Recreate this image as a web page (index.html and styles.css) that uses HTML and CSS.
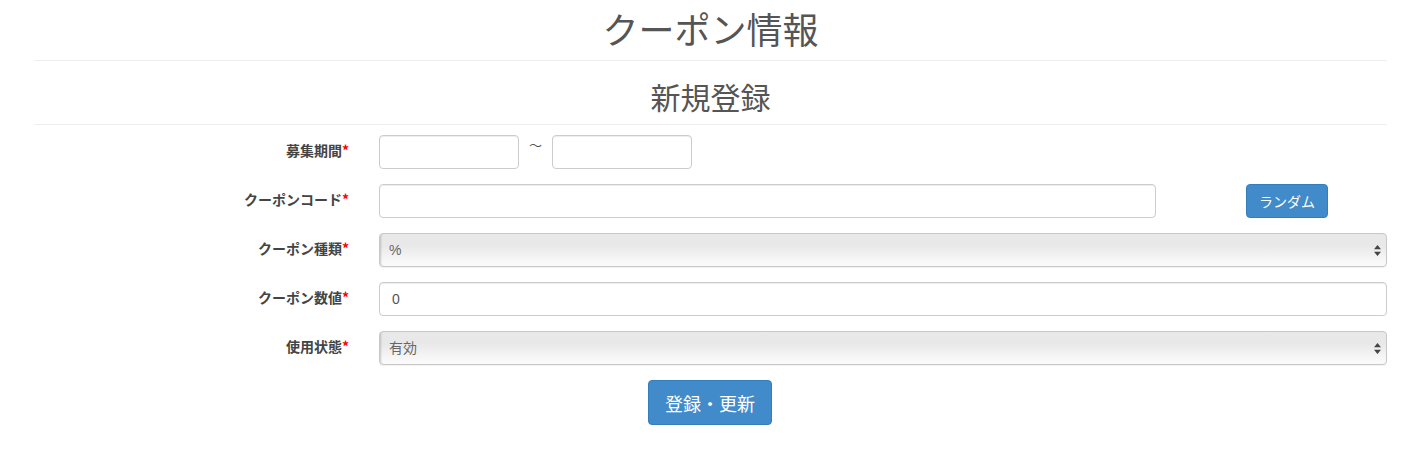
FILE: index.html
```html
<!DOCTYPE html>
<html lang="ja">
<head>
<meta charset="utf-8">
<title>クーポン情報</title>
<link rel="stylesheet" href="styles.css">
</head>
<body>
<div class="page">
  <h1 class="title">クーポン情報</h1>
  <hr class="rule">
  <h2 class="subtitle">新規登録</h2>
  <hr class="rule">
  <form class="form">
    <div class="form-row">
      <label class="label">募集期間<span class="req">*</span></label>
      <div class="field dates">
        <input class="input date" type="text">
        <span class="tilde">〜</span>
        <input class="input date" type="text">
      </div>
    </div>
    <div class="form-row">
      <label class="label">クーポンコード<span class="req">*</span></label>
      <div class="field code">
        <input class="input" type="text">
        <button type="button" class="btn btn-random">ランダム</button>
      </div>
    </div>
    <div class="form-row">
      <label class="label">クーポン種類<span class="req">*</span></label>
      <div class="field select-wrap">
        <div class="select">%</div>
        <svg class="arrows" width="7" height="11" viewBox="0 0 7 11"><path d="M3.5 0 L7 4.2 L0 4.2 Z M3.5 11 L7 6.8 L0 6.8 Z" fill="#444"/></svg>
      </div>
    </div>
    <div class="form-row">
      <label class="label">クーポン数値<span class="req">*</span></label>
      <div class="field">
        <input class="input" type="text" value="0">
      </div>
    </div>
    <div class="form-row">
      <label class="label">使用状態<span class="req">*</span></label>
      <div class="field select-wrap">
        <div class="select">有効</div>
        <svg class="arrows" width="7" height="11" viewBox="0 0 7 11"><path d="M3.5 0 L7 4.2 L0 4.2 Z M3.5 11 L7 6.8 L0 6.8 Z" fill="#444"/></svg>
      </div>
    </div>
    <div class="actions">
      <button type="submit" class="btn btn-submit">登録・更新</button>
    </div>
  </form>
</div>
</body>
</html>
```
FILE: styles.css
```css
* { box-sizing: border-box; }
html, body { margin: 0; padding: 0; background: #fff; }
body {
  font-family: "Liberation Sans", "Noto Sans CJK JP", sans-serif;
  font-size: 14px;
  line-height: 20px;
  color: #333;
}
.page {
  padding: 0 37px 0 34px;
}
.title {
  margin: 8px 0 0;
  font-size: 36px;
  line-height: 40px;
  font-weight: 400;
  text-align: center;
  color: #555;
  font-family: "Noto Sans CJK JP", sans-serif;
}
.subtitle {
  margin: 0;
  font-size: 30px;
  line-height: 33px;
  font-weight: 400;
  text-align: center;
  color: #555;
  font-family: "Noto Sans CJK JP", sans-serif;
}
.rule {
  border: 0;
  border-top: 1px solid #eee;
  margin: 12px 0 0;
  height: 0;
}
.rule + .subtitle { margin-top: 19px; }
.subtitle + .rule { margin-top: 11px; }
.form { margin-top: 10px; }
.form-row {
  display: grid;
  grid-template-columns: 315px 1fr;
  column-gap: 30px;
  margin-bottom: 15px;
}
.label {
  text-align: right;
  padding-top: 5px;
  font-weight: 700;
  font-size: 14px;
  color: #444;
  font-family: "Noto Sans CJK JP", sans-serif;
}
.req { color: #f00; }
.field { min-width: 0; }
.input {
  display: block;
  width: 100%;
  height: 34px;
  padding: 6px 12px;
  font-size: 14px;
  line-height: 20px;
  color: #555;
  background: #fff;
  border: 1px solid #ccc;
  border-radius: 4px;
  box-shadow: inset 0 1px 1px rgba(0,0,0,0.075);
  font-family: "Liberation Sans", "Noto Sans CJK JP", sans-serif;
  outline: none;
}
.dates {
  display: flex;
  align-items: flex-start;
}
.input.date { width: 140px; }
.tilde {
  width: 33px;
  text-align: center;
  line-height: 20px;
  color: #555;
  font-family: "Noto Sans CJK JP", sans-serif;
  font-size: 13px;
}
.code {
  display: grid;
  grid-template-columns: 777px auto;
  justify-content: start;
}
.btn {
  display: inline-block;
  border: 1px solid #357ebd;
  background: #428bca;
  color: #fff;
  border-radius: 4px;
  font-family: "Noto Sans CJK JP", sans-serif;
  cursor: pointer;
}
.btn-random {
  margin-left: 90px;
  width: 82px;
  height: 34px;
  padding: 6px 0;
  font-size: 14px;
  line-height: 20px;
}
.select-wrap { position: relative; }
.select {
  height: 34px;
  padding: 6px 9px;
  font-size: 14px;
  line-height: 20px;
  color: #666;
  border: 1px solid #c8c8c8;
  border-radius: 4px;
  background: linear-gradient(to bottom, #e9e9e9 0%, #e8e8e8 35%, #f6f6f6 80%, #fbfbfb 100%);
  box-shadow: inset 2px 0 2px -1px rgba(0,0,0,0.18), 0 1px 1px rgba(0,0,0,0.06);
  font-family: "Liberation Sans", "Noto Sans CJK JP", sans-serif;
}
.arrows {
  position: absolute;
  right: 6px;
  top: 12px;
}
.actions {
  display: flex;
  justify-content: center;
  padding-right: 1px;
}
.btn-submit {
  width: 124px;
  height: 45px;
  padding: 10px 16px;
  font-size: 18px;
  line-height: 24px;
}
```
